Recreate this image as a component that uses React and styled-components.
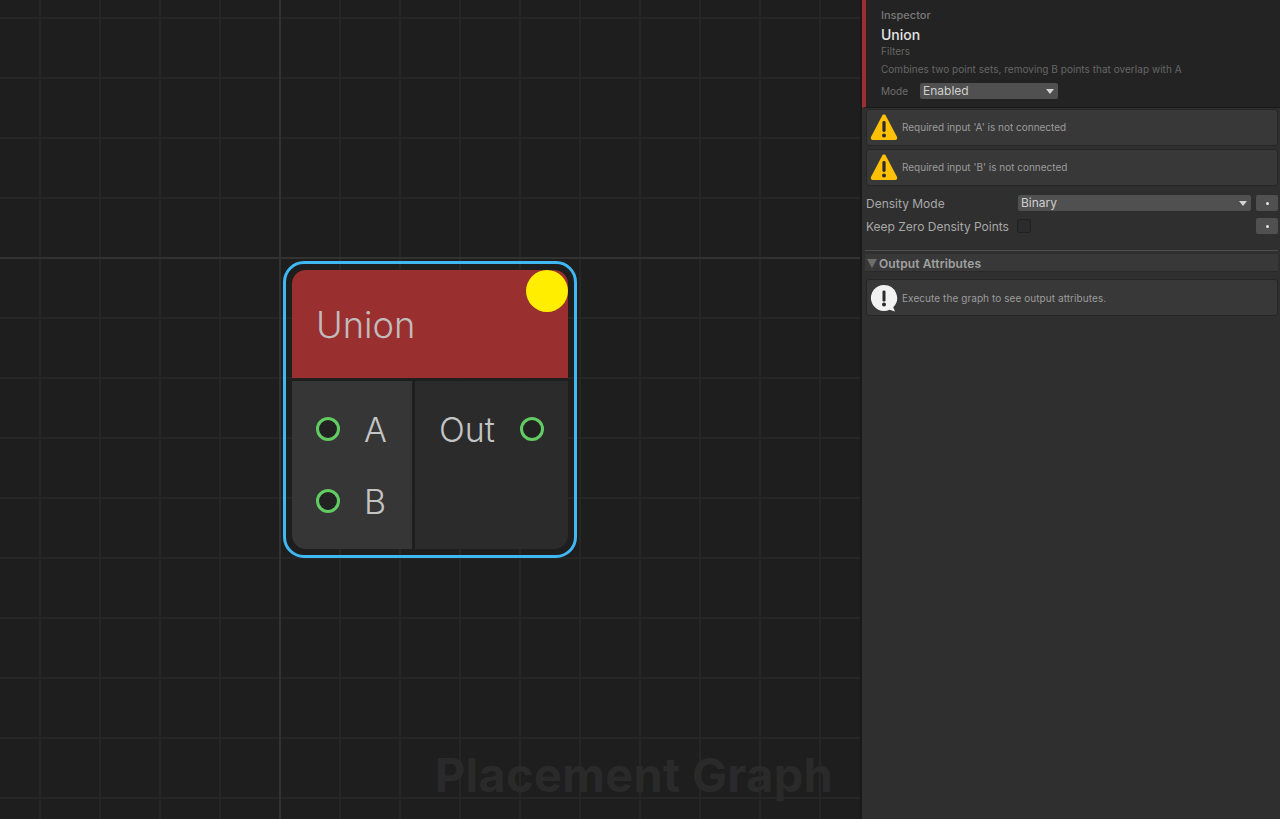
import React from "react";
import styled, { createGlobalStyle } from "styled-components";

const GlobalStyle = createGlobalStyle`
  html, body, #root {
    margin: 0;
    height: 100%;
    background: #1e1e1e;
  }
  body {
    font-family: Inter, "Liberation Sans", sans-serif;
    overflow: hidden;
  }
`;

const Page = styled.div`
  display: flex;
  width: 1280px;
  height: 819px;
  overflow: hidden;
`;

const Canvas = styled.div`
  position: relative;
  width: 860px;
  flex: none;
  overflow: hidden;
  background-color: #1e1e1e;
  background-image:
    linear-gradient(to right, #323232 0, #323232 2px, transparent 2px),
    linear-gradient(to bottom, #323232 0, #323232 2px, transparent 2px),
    linear-gradient(to right, #262626 0, #262626 2px, transparent 2px),
    linear-gradient(to bottom, #262626 0, #262626 2px, transparent 2px);
  background-size: 600px 600px, 600px 600px, 60px 60px, 60px 60px;
  background-position: 279px 0, 0 257px, 39px 0, 0 17px;
`;

const Watermark = styled.div`
  position: absolute;
  right: 27px;
  bottom: 14px;
  font-size: 46.8px;
  font-weight: 700;
  line-height: 60px;
  letter-spacing: 0.35px;
  color: #2a2a2a;
  white-space: nowrap;
`;

const NodeFrame = styled.div`
  position: absolute;
  left: 283px;
  top: 261px;
  width: 294px;
  height: 297px;
  box-sizing: border-box;
  padding: 6px;
  border: 3px solid #3fb8f4;
  border-radius: 21px;
  display: flex;
`;

const Node = styled.div`
  flex: 1;
  display: flex;
  flex-direction: column;
  gap: 3px;
  border-radius: 14px;
  overflow: hidden;
  background: rgba(30, 30, 30, 0.7);
`;

const NodeHeader = styled.div`
  position: relative;
  height: 108px;
  flex: none;
  box-sizing: border-box;
  background: #9a2f2f;
  display: flex;
  align-items: center;
  padding: 2px 0 0 24px;
  font-size: 36.3px;
  font-weight: 300;
  color: #c0bcbc;
`;

const StatusDot = styled.div`
  position: absolute;
  top: 0;
  right: 0;
  width: 42px;
  height: 42px;
  border-radius: 50%;
  background: #ffee00;
`;

const NodeBody = styled.div`
  flex: 1;
  display: flex;
  gap: 3px;
`;

const PortColumn = styled.div`
  width: ${(p) => p.$width};
  flex: ${(p) => (p.$width ? "none" : "1")};
  background: ${(p) => p.$bg};
  display: flex;
  flex-direction: column;
  gap: 24px;
  padding-top: 24px;
  box-sizing: border-box;
`;

const PortRow = styled.div`
  display: flex;
  align-items: center;
  height: 48px;
  padding: ${(p) => (p.$output ? "0 24px 0 24px" : "0 0 0 24px")};
  justify-content: ${(p) => (p.$output ? "space-between" : "flex-start")};
  gap: 24px;
  font-size: 34px;
  font-weight: 300;
  color: #c4c4c4;
`;

const Port = styled.span`
  width: 24px;
  height: 24px;
  box-sizing: border-box;
  flex: none;
  border: 3px solid #62cb62;
  border-radius: 50%;
  background: #222222;
`;

const PortName = styled.span`
  line-height: 48px;
  padding-top: 1px;
`;

const Panel = styled.div`
  flex: 1;
  display: flex;
  flex-direction: column;
  background: #2f2f2f;
  border-left: 2px solid #191919;
  min-width: 0;
`;

const InspectorHead = styled.div`
  height: 108px;
  flex: none;
  box-sizing: border-box;
  background: #232323;
  border-left: 4px solid #9a2f2f;
  border-bottom: 1px solid #191919;
  padding: 9px 0 0 15px;
  display: flex;
  flex-direction: column;
`;

const HeadLabel = styled.div`
  font-size: 11px;
  line-height: 12px;
  font-weight: 500;
  color: #787878;
`;

const HeadTitle = styled.div`
  font-size: 14px;
  line-height: 17px;
  font-weight: 500;
  color: #e4e4e4;
  margin-top: 5px;
`;

const HeadMuted = styled.div`
  font-size: 10px;
  line-height: 12px;
  letter-spacing: 0.03px;
  color: #666666;
  margin-top: ${(p) => p.$gap};
`;

const ModeRow = styled.div`
  display: flex;
  align-items: center;
  gap: 12px;
  margin-top: 8px;
`;

const ModeLabel = styled.span`
  width: 27px;
  font-size: 10px;
  color: #6e6e6e;
`;

const Select = styled.div`
  position: relative;
  width: ${(p) => p.$width};
  height: 16px;
  box-sizing: border-box;
  background: #505050;
  border-radius: 2px;
  padding-left: 3px;
  font-size: 12px;
  line-height: 15px;
  color: #cfcfcf;

  &::after {
    content: "";
    position: absolute;
    right: 4px;
    top: 6px;
    border-left: 4px solid transparent;
    border-right: 4px solid transparent;
    border-top: 5px solid #d4d4d4;
  }
`;

const Content = styled.div`
  display: flex;
  flex-direction: column;
  padding: 1px 2px 0 4px;
`;

const MessageBox = styled.div`
  height: 37px;
  box-sizing: border-box;
  display: flex;
  align-items: center;
  gap: 4px;
  background: #383838;
  border: 1px solid #262626;
  border-radius: 3px;
  padding: ${(p) => (p.$info ? "0 0 0 3px" : "0 0 2px 3px")};
  margin-bottom: 3px;
  font-size: 10px;
  font-weight: 400;
  letter-spacing: ${(p) => (p.$info ? "0.07px" : "0")};
  color: #9c9c9c;
`;

const PropRow = styled.div`
  display: flex;
  align-items: center;
  height: 16px;
  margin-top: ${(p) => p.$top};
`;

const PropLabel = styled.span`
  width: 152px;
  flex: none;
  font-size: 12px;
  color: #a8a8a8;
  white-space: nowrap;
`;

const Checkbox = styled.span`
  width: 14px;
  height: 14px;
  box-sizing: border-box;
  flex: none;
  margin-left: -1px;
  background: #2b2b2b;
  border: 1px solid #212121;
  border-radius: 2px;
`;

const ResetButton = styled.button`
  width: 22px;
  height: 16px;
  flex: none;
  margin: 0 0 0 auto;
  padding: 0;
  border: none;
  border-radius: 2px;
  background: #505050;
  display: flex;
  align-items: center;
  justify-content: center;

  &::after {
    content: "";
    width: 3px;
    height: 3px;
    border-radius: 50%;
    background: #e4e4e4;
  }
`;

const Separator = styled.div`
  height: 1px;
  margin: 16px 0 3px -1px;
  background: #4c4c4c;
`;

const FoldHeader = styled.div`
  height: 18px;
  display: flex;
  align-items: center;
  gap: 2px;
  margin-left: -1px;
  padding-top: 1px;
  background: #383838;
  border-bottom: 1px solid #2a2a2a;
  box-sizing: border-box;
  font-size: 12px;
  font-weight: 600;
  letter-spacing: 0.12px;
  color: #a0a0a0;
  margin-bottom: 7px;
`;

const FoldArrow = styled.span`
  margin-left: 2px;
  border-left: 5px solid transparent;
  border-right: 5px solid transparent;
  border-top: 9px solid #6e6e6e;
`;

const WarningIcon = () => (
  <svg width="28" height="28" viewBox="0 0 28 28">
    <path d="M14 1.5 C14.9 1.5 15.5 2 16 2.9 L27 24 C27.7 25.5 26.9 27 25.2 27 L2.8 27 C1.1 27 .3 25.5 1 24 L12 2.9 C12.5 2 13.1 1.5 14 1.5 Z" fill="#ffc107" />
    <rect x="12.4" y="8" width="3.2" height="11" rx="1.4" fill="#2b2b2b" />
    <circle cx="14" cy="22.4" r="2" fill="#2b2b2b" />
  </svg>
);

const InfoIcon = () => (
  <svg width="28" height="28" viewBox="0 0 28 28">
    <path d="M14 1 A13 13 0 1 0 19.6 25.7 L25 27.5 L23.2 23.2 A13 13 0 0 0 14 1 Z" fill="#f2f2f2" />
    <rect x="12.5" y="6.5" width="3" height="11" rx="1.3" fill="#2b2b2b" />
    <circle cx="14" cy="20.6" r="2" fill="#2b2b2b" />
  </svg>
);

const App = () => {
  return (
    <>
      <GlobalStyle />
      <Page>
        <Canvas>
          <NodeFrame>
            <Node>
              <NodeHeader>
                Union
                <StatusDot />
              </NodeHeader>
              <NodeBody>
                <PortColumn $width="120px" $bg="#363636">
                  <PortRow>
                    <Port />
                    <PortName>A</PortName>
                  </PortRow>
                  <PortRow>
                    <Port />
                    <PortName>B</PortName>
                  </PortRow>
                </PortColumn>
                <PortColumn $bg="#2b2b2b">
                  <PortRow $output>
                    <PortName>Out</PortName>
                    <Port />
                  </PortRow>
                </PortColumn>
              </NodeBody>
            </Node>
          </NodeFrame>
          <Watermark>Placement Graph</Watermark>
        </Canvas>
        <Panel>
          <InspectorHead>
            <HeadLabel>Inspector</HeadLabel>
            <HeadTitle>Union</HeadTitle>
            <HeadMuted $gap="2px">Filters</HeadMuted>
            <HeadMuted $gap="6px">Combines two point sets, removing B points that overlap with A</HeadMuted>
            <ModeRow>
              <ModeLabel>Mode</ModeLabel>
              <Select $width="138px">Enabled</Select>
            </ModeRow>
          </InspectorHead>
          <Content>
            <MessageBox>
              <WarningIcon />
              Required input 'A' is not connected
            </MessageBox>
            <MessageBox>
              <WarningIcon />
              Required input 'B' is not connected
            </MessageBox>
            <PropRow $top="6px">
              <PropLabel>Density Mode</PropLabel>
              <Select $width="233px">Binary</Select>
              <ResetButton />
            </PropRow>
            <PropRow $top="7px">
              <PropLabel>Keep Zero Density Points</PropLabel>
              <Checkbox />
              <ResetButton />
            </PropRow>
            <Separator />
            <FoldHeader>
              <FoldArrow />
              Output Attributes
            </FoldHeader>
            <MessageBox $info>
              <InfoIcon />
              Execute the graph to see output attributes.
            </MessageBox>
          </Content>
        </Panel>
      </Page>
    </>
  );
};

export default App;
